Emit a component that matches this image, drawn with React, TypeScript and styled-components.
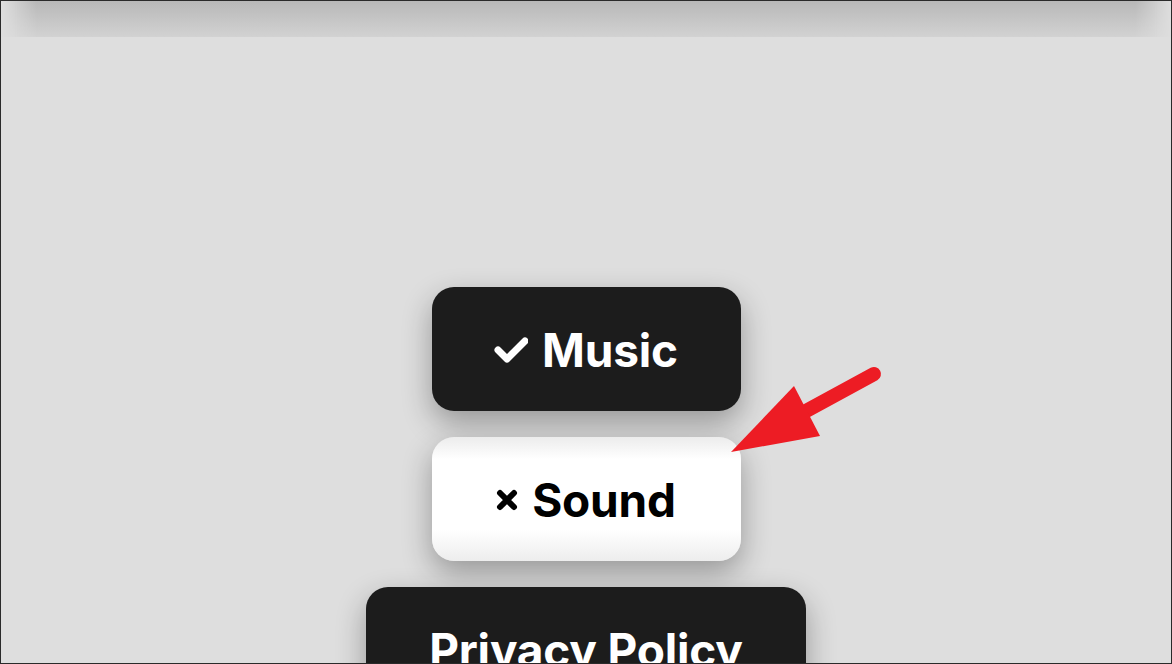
import React from "react";
import styled, { createGlobalStyle } from "styled-components";

const GlobalStyle = createGlobalStyle`
  html, body {
    margin: 0;
    padding: 0;
    background: #dedede;
  }
  * {
    box-sizing: border-box;
  }
`;

const Screen = styled.div`
  position: relative;
  width: 1172px;
  height: 664px;
  overflow: hidden;
  background: #dedede;
  border: 1px solid #2a2a2a;
  display: flex;
  flex-direction: column;
  align-items: center;
  font-family: Inter, "Liberation Sans", sans-serif;
`;

const TopShade = styled.div`
  width: 100%;
  height: 36px;
  flex-shrink: 0;
  background: linear-gradient(to bottom, #b8b8b8, #d2d2d2);
  -webkit-mask-image: linear-gradient(to right, transparent, black 3%, black 97%, transparent);
  mask-image: linear-gradient(to right, transparent, black 3%, black 97%, transparent);
`;

const Menu = styled.div`
  margin-top: 250px;
  display: flex;
  flex-direction: column;
  align-items: center;
  gap: 26px;
`;

const MenuButton = styled.button<{ $light?: boolean; $wide?: boolean }>`
  width: ${(p) => (p.$wide ? "440px" : "309px")};
  height: 124px;
  flex-shrink: 0;
  border: none;
  border-radius: 22px;
  display: flex;
  align-items: center;
  justify-content: center;
  gap: 14px;
  padding: 2px 0 0;
  font-family: Inter, "Liberation Sans", sans-serif;
  font-weight: 700;
  font-size: 46px;
  letter-spacing: -0.2px;
  color: ${(p) => (p.$light ? "#000" : "#fff")};
  background: ${(p) =>
    p.$light
      ? "linear-gradient(to bottom, #ececec 0%, #ffffff 18%, #ffffff 75%, #ededed 100%)"
      : "#1c1c1c"};
  box-shadow: 0 12px 30px rgba(0, 0, 0, 0.32);
`;

const Arrow = styled.svg`
  position: absolute;
  left: 0;
  top: 0;
  pointer-events: none;
`;

const CheckIcon = () => (
  <svg width="34" height="26" viewBox="0 0 34 26">
    <polyline
      points="4,13 13,22 31,4"
      fill="none"
      stroke="#fff"
      strokeWidth="7"
      strokeLinecap="round"
      strokeLinejoin="round"
    />
  </svg>
);

const CrossIcon = () => (
  <svg width="22" height="22" viewBox="0 0 22 22">
    <path
      d="M4 4 L18 18 M18 4 L4 18"
      fill="none"
      stroke="#000"
      strokeWidth="6"
      strokeLinecap="round"
    />
  </svg>
);

export default function App() {
  return (
    <>
      <GlobalStyle />
      <Screen>
        <TopShade />
        <Menu>
          <MenuButton>
            <CheckIcon />
            Music
          </MenuButton>
          <MenuButton $light>
            <CrossIcon />
            Sound
          </MenuButton>
          <MenuButton $wide>Privacy Policy</MenuButton>
        </Menu>
        <Arrow width="1172" height="664" viewBox="0 0 1172 664">
          <line
            x1="873"
            y1="373"
            x2="805"
            y2="410"
            stroke="#ed1c24"
            strokeWidth="14"
            strokeLinecap="round"
          />
          <polygon points="730,451 793,385 819,435" fill="#ed1c24" />
        </Arrow>
      </Screen>
    </>
  );
}
